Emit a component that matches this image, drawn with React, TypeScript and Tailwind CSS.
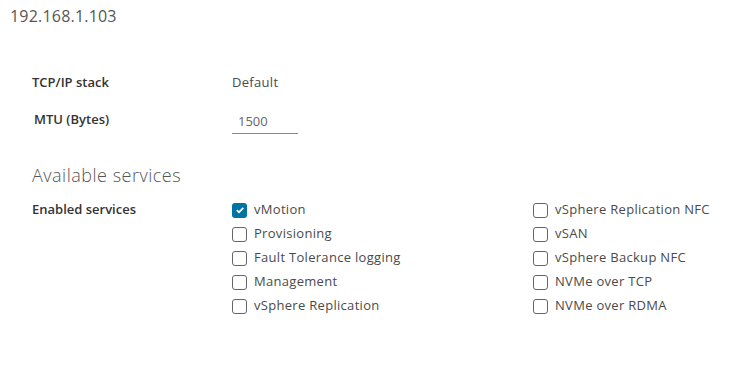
import React from 'react';

const LEFT = [
  { label: 'vMotion', checked: true },
  { label: 'Provisioning' },
  { label: 'Fault Tolerance logging' },
  { label: 'Management' },
  { label: 'vSphere Replication' },
];

const RIGHT = [
  { label: 'vSphere Replication NFC' },
  { label: 'vSAN' },
  { label: 'vSphere Backup NFC' },
  { label: 'NVMe over TCP' },
  { label: 'NVMe over RDMA' },
];

function Check({ label, checked }: { label: string; checked?: boolean }) {
  return (
    <label className="flex items-center h-6 gap-[7px] text-[13px] text-[#4a4a4a] tracking-[0.3px]">
      {checked ? (
        <span className="w-[15px] h-[15px] rounded-[3px] bg-[#0072a3] flex items-center justify-center">
          <svg width="10" height="10" viewBox="0 0 10 10">
            <path d="M1.8 5.2 L4 7.3 L8.3 2.8" fill="none" stroke="white" strokeWidth="1.8" />
          </svg>
        </span>
      ) : (
        <span className="w-[15px] h-[15px] rounded-[3px] border border-[#666] bg-white" />
      )}
      <span>{label}</span>
    </label>
  );
}

export default function App() {
  return (
    <div className="w-[735px] h-[385px] bg-white text-[#454545]" style={{ fontFamily: '"Open Sans", "Noto Sans", sans-serif' }}>
      <div className="pl-[10px] pt-[4px] text-[16px] text-[#565656] leading-6 tracking-[0.2px]">192.168.1.103</div>

      <div className="pl-[32px] pt-[43px]">
        <div className="flex items-center h-6">
          <div className="w-[200px] text-[13px] font-semibold text-[#333]">TCP/IP stack</div>
          <div className="text-[13px] text-[#4a4a4a] tracking-[0.3px]">Default</div>
        </div>
        <div className="flex items-center h-6 mt-[13px]">
          <div className="w-[200px] pl-[2px] text-[13px] font-semibold text-[#333]">MTU (Bytes)</div>
          <div className="w-[66px] border-b border-[#888] pl-[6px] pt-[5px] pb-[2px] text-[13px] text-[#666] leading-5">1500</div>
        </div>

        <div className="mt-[31px] text-[18px] font-light text-[#565656] leading-6 tracking-[0.5px]">Available services</div>

        <div className="flex mt-[11px]">
          <div className="w-[200px] h-6 flex items-center text-[13px] font-semibold text-[#333]">Enabled services</div>
          <div className="w-[301px] flex flex-col">
            {LEFT.map((s) => (
              <Check key={s.label} {...s} />
            ))}
          </div>
          <div className="flex flex-col">
            {RIGHT.map((s) => (
              <Check key={s.label} {...s} />
            ))}
          </div>
        </div>
      </div>
    </div>
  );
}
